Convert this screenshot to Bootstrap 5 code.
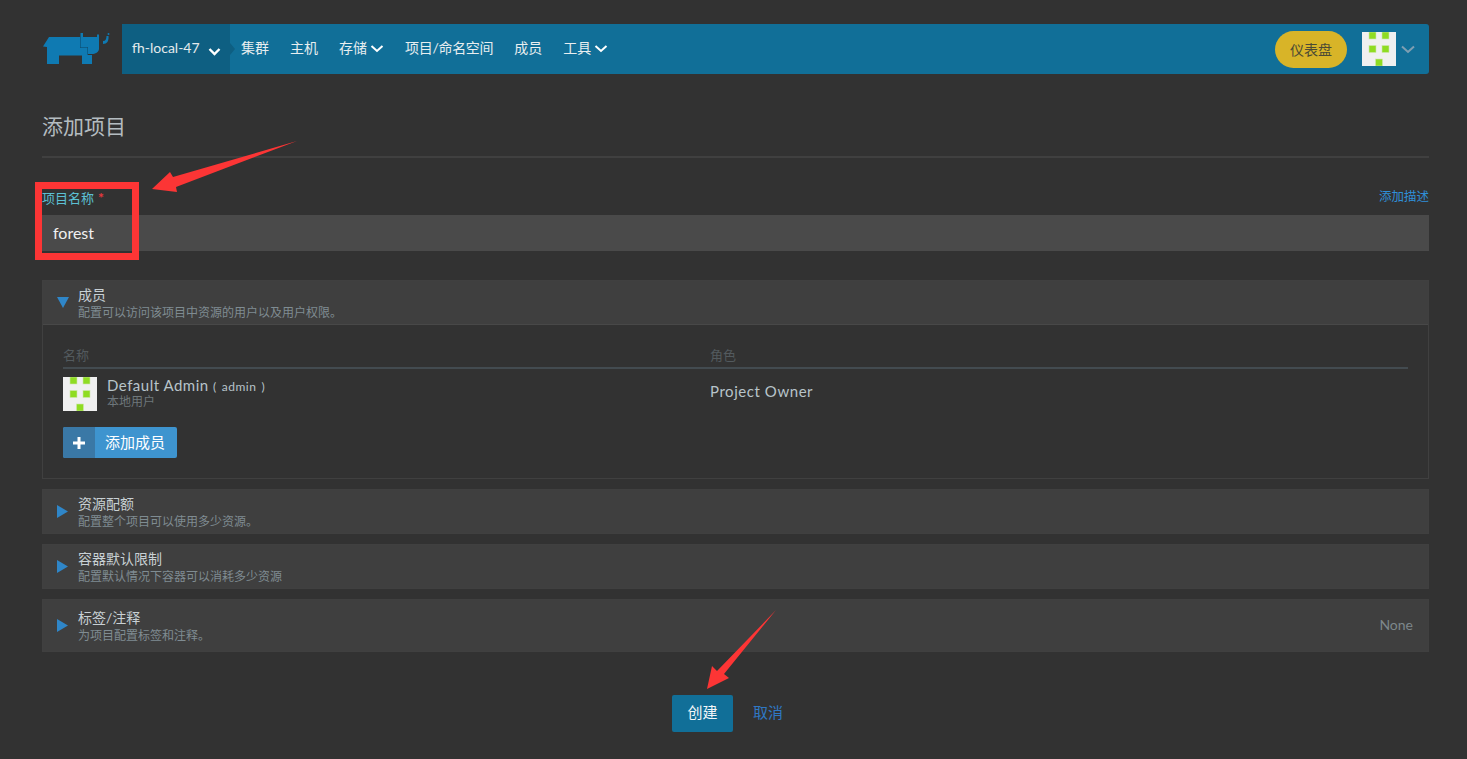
<!DOCTYPE html>
<html lang="zh">
<head>
<meta charset="utf-8">
<title>添加项目</title>
<link href="https://cdn.jsdelivr.net/npm/bootstrap@5.3.0/dist/css/bootstrap.min.css" rel="stylesheet">
<style>
html,body{height:100%;}
body{background:#323232;color:#c8d0d4;font-family:Lato,"Noto Sans CJK SC",sans-serif;font-size:14px;overflow:hidden;}
.page-wrap{padding:24px 38px 0 42px;position:relative;height:759px;}
.top-bar{height:50px;}
.logo-box{width:80px;flex:none;}
.logo-svg{margin-top:2px;}
.nav-strip{background:#116f98;border-radius:0 3px 3px 0;flex:1;height:50px;}
.env-sel{width:108px;background:#0e5f82;color:#e4eaec;padding-left:10px;position:relative;font-size:14px;flex:none;padding-bottom:3px;}
.env-sel::after{content:"";position:absolute;right:-5px;top:19px;border-left:5px solid #0e5f82;border-top:6px solid transparent;border-bottom:6px solid transparent;}
.nav-entry{color:#e8eef0;font-size:14px;text-decoration:none;white-space:nowrap;margin-bottom:4px;}
.nav-tight{letter-spacing:-.3px;}
.nav-list{gap:21px;padding-left:11px;}
.chev{margin-left:3px;margin-top:2px;}
.dash-pill{background:#d8b428;color:#4b4a35;border-radius:19px;width:72px;height:37px;font-size:14px;}
.avatar-box{width:34px;height:34px;flex:none;display:block;}
.gap-pill{margin-left:15px;}
.gap-chev{margin-left:5px;margin-right:14px;}
.page-title{font-size:21px;font-weight:400;color:#b4bcc0;margin:0;padding:36px 0 14px;line-height:32px;border-bottom:2px solid #404040;}
.form-top{padding-top:32px;height:57px;line-height:16px;}
.name-label{color:#5cc0d4;font-size:13px;}
.req-star{color:#e8383e;margin-left:4px;font-weight:700;font-size:14px;}
.add-desc{color:#2f8fd8;font-size:12.500px;text-decoration:none;margin-top:-1px;}
.name-field{background:#4a4a4a;color:#f0f0f0;height:36px;padding:0 11px;font-size:16px;line-height:36px;}
.sect{border:1px solid #404040;margin-bottom:10px;}
.sect-first{margin-top:29px;}
.sect-head{background:#3f3f3f;height:43px;padding:0 15px 0 14px;}
.sect-head-tall{height:51px;}
.sect-title{color:#c8d0d4;font-size:14px;line-height:16px;margin-bottom:4px;}
.sect-sub{color:#7f8c92;font-size:12px;line-height:12px;}
.tri-box{width:21px;flex:none;}
.tri-box svg{display:block;}
.sect-body{height:154px;border-top:1px solid #484848;padding:22px 20px 0;}
.col-head{color:#535a5e;font-size:13px;line-height:17px;border-bottom:2px solid #434b50;height:22px;}
.col-a{width:647px;flex:none;}
.user-line{height:48px;padding-top:8px;}
.user-name{color:#b8c4ca;font-size:15px;line-height:17px;letter-spacing:.5px;}
.user-name span{font-size:12px;word-spacing:1.500px;}
.user-sub{color:#6e777b;font-size:12px;line-height:13px;}
.user-info{margin-left:10px;}
.role-text{color:#b8c4ca;font-size:15px;letter-spacing:.55px;padding-top:3px;}
.add-btn{width:114px;height:31px;background:#3e94cf;color:#fff;border-radius:2px;overflow:hidden;margin-top:10px;font-size:15px;}
.add-ico{width:32px;background:#3a78a6;flex:none;}
.add-text{padding-right:2px;}
.none-txt{color:#7d878b;font-size:14px;margin-bottom:2px;}
.act-row{padding-top:33px;gap:20px;padding-left:630px;}
.create-btn{width:61px;height:37px;background:#116f98;color:#f2f6f8;border-radius:2px;font-size:15px;padding-bottom:2px;}
.cancel-link{color:#2f78c4;font-size:15px;text-decoration:none;margin-bottom:2px;}
.note-layer{position:absolute;left:0;top:0;pointer-events:none;}
</style>
</head>
<body>
<svg width="0" height="0" class="position-absolute">
  <defs>
    <g id="ident">
      <rect width="34" height="34" fill="#f0f0f0"/>
      <g fill="#8fdc22" stroke="#cfe8ae" stroke-width=".6">
        <rect x="7" y="0" width="7" height="7"/><rect x="20" y="0" width="7" height="7"/>
        <rect x="7" y="13.500" width="7" height="7"/><rect x="20" y="13.500" width="7" height="7"/>
        <rect x="13.500" y="27" width="7" height="7"/>
      </g>
    </g>
  </defs>
</svg>
<div class="page-wrap">
  <header class="top-bar d-flex">
    <div class="logo-box d-flex align-items-center">
      <svg class="logo-svg" width="68" height="34" viewBox="0 0 68 34">
        <path fill="#0f7ab2" d="M1 13.500 7 4H38V15H45V22H50V31H40V22.500H17V31H5V14Z"/>
        <path fill="#0f7ab2" d="M38.500 0H41V4H55V1.500H57V16C57 19 53 21 50 21H46V14H38.500Z"/>
        <path fill="none" stroke="#0c5f8b" d="M38.500 4V14.500H45.500V22"/>
        <path fill="#0f7ab2" d="M61 8C63.500 8 64.500 6 64.500 3H66.500C67 8 65 11 61 11Z"/>
        <circle cx="66.500" cy="1" r="1" fill="#0f7ab2"/>
      </svg>
    </div>
    <nav class="nav-strip d-flex align-items-stretch">
      <div class="env-sel d-flex align-items-center">fh-local-47
        <svg class="ms-2 mt-2" width="13" height="9" viewBox="0 0 13 9"><path d="M1.500 2 6.500 7 11.500 2" fill="none" stroke="#fff" stroke-width="2.400"/></svg>
      </div>
      <div class="nav-list d-flex align-items-center">
        <a class="nav-entry" href="#">集群</a>
        <a class="nav-entry" href="#">主机</a>
        <a class="nav-entry d-flex align-items-center" href="#">存储<svg class="chev" width="14" height="9" viewBox="0 0 14 9"><path d="M1.500 2 7 7 12.500 2" fill="none" stroke="#fff" stroke-width="2"/></svg></a>
        <a class="nav-entry nav-tight" href="#">项目/命名空间</a>
        <a class="nav-entry" href="#">成员</a>
        <a class="nav-entry d-flex align-items-center" href="#">工具<svg class="chev" width="14" height="9" viewBox="0 0 14 9"><path d="M1.500 2 7 7 12.500 2" fill="none" stroke="#fff" stroke-width="2"/></svg></a>
      </div>
      <div class="ms-auto d-flex align-items-center">
        <div class="dash-pill d-flex align-items-center justify-content-center">仪表盘</div>
        <svg class="avatar-box gap-pill" viewBox="0 0 34 34"><use href="#ident"/></svg>
        <svg class="gap-chev" width="14" height="9" viewBox="0 0 14 9"><path d="M1 1.500 7 7 13 1.500" fill="none" stroke="#7f9fb2" stroke-width="2"/></svg>
      </div>
    </nav>
  </header>

  <h1 class="page-title">添加项目</h1>

  <div class="form-top d-flex justify-content-between">
    <span class="name-label">项目名称<span class="req-star">*</span></span>
    <a class="add-desc" href="#">添加描述</a>
  </div>
  <div class="name-field">forest</div>

  <section class="sect sect-first">
    <div class="sect-head d-flex align-items-center">
      <div class="tri-box"><svg width="12" height="11" viewBox="0 0 12 11"><path d="M0 0H12L6 11Z" fill="#2f86c8"/></svg></div>
      <div>
        <div class="sect-title">成员</div>
        <div class="sect-sub">配置可以访问该项目中资源的用户以及用户权限。</div>
      </div>
    </div>
    <div class="sect-body">
      <div class="col-head d-flex"><div class="col-a">名称</div><div>角色</div></div>
      <div class="user-line d-flex">
        <div class="col-a d-flex">
          <svg class="avatar-box" viewBox="0 0 34 34"><use href="#ident"/></svg>
          <div class="user-info">
            <div class="user-name">Default Admin <span>( admin )</span></div>
            <div class="user-sub">本地用户</div>
          </div>
        </div>
        <div class="role-text">Project Owner</div>
      </div>
      <div class="add-btn d-flex">
        <div class="add-ico d-flex align-items-center justify-content-center">
          <svg width="12" height="12" viewBox="0 0 12 12"><path d="M4.500 0H7.500V4.500H12V7.500H7.500V12H4.500V7.500H0V4.500H4.500Z" fill="#fff"/></svg>
        </div>
        <div class="add-text flex-grow-1 d-flex align-items-center justify-content-center">添加成员</div>
      </div>
    </div>
  </section>

  <section class="sect">
    <div class="sect-head d-flex align-items-center">
      <div class="tri-box"><svg width="11" height="13" viewBox="0 0 11 13"><path d="M0 0 11 6.500 0 13Z" fill="#2f86c8"/></svg></div>
      <div>
        <div class="sect-title">资源配额</div>
        <div class="sect-sub">配置整个项目可以使用多少资源。</div>
      </div>
    </div>
  </section>

  <section class="sect">
    <div class="sect-head d-flex align-items-center">
      <div class="tri-box"><svg width="11" height="13" viewBox="0 0 11 13"><path d="M0 0 11 6.500 0 13Z" fill="#2f86c8"/></svg></div>
      <div>
        <div class="sect-title">容器默认限制</div>
        <div class="sect-sub">配置默认情况下容器可以消耗多少资源</div>
      </div>
    </div>
  </section>

  <section class="sect">
    <div class="sect-head sect-head-tall d-flex align-items-center">
      <div class="tri-box"><svg width="11" height="13" viewBox="0 0 11 13"><path d="M0 0 11 6.500 0 13Z" fill="#2f86c8"/></svg></div>
      <div>
        <div class="sect-title">标签/注释</div>
        <div class="sect-sub">为项目配置标签和注释。</div>
      </div>
      <div class="none-txt ms-auto">None</div>
    </div>
  </section>

  <div class="act-row d-flex align-items-center">
    <div class="create-btn d-flex align-items-center justify-content-center">创建</div>
    <a class="cancel-link" href="#">取消</a>
  </div>

  <svg class="note-layer" width="1467" height="759" viewBox="0 0 1467 759">
    <rect x="38.500" y="185.500" width="97" height="71" fill="none" stroke="#fc3535" stroke-width="7"/>
    <path fill="#fc3535" d="M297 141 173 177 170 172 152 189 177 192 176 187Z"/>
    <path fill="#fc3535" d="M776 610 717 671 712 666 707 689 729 678 724 674Z"/>
  </svg>
</div>
<script src="https://cdn.jsdelivr.net/npm/bootstrap@5.3.0/dist/js/bootstrap.bundle.min.js"></script>
</body>
</html>
